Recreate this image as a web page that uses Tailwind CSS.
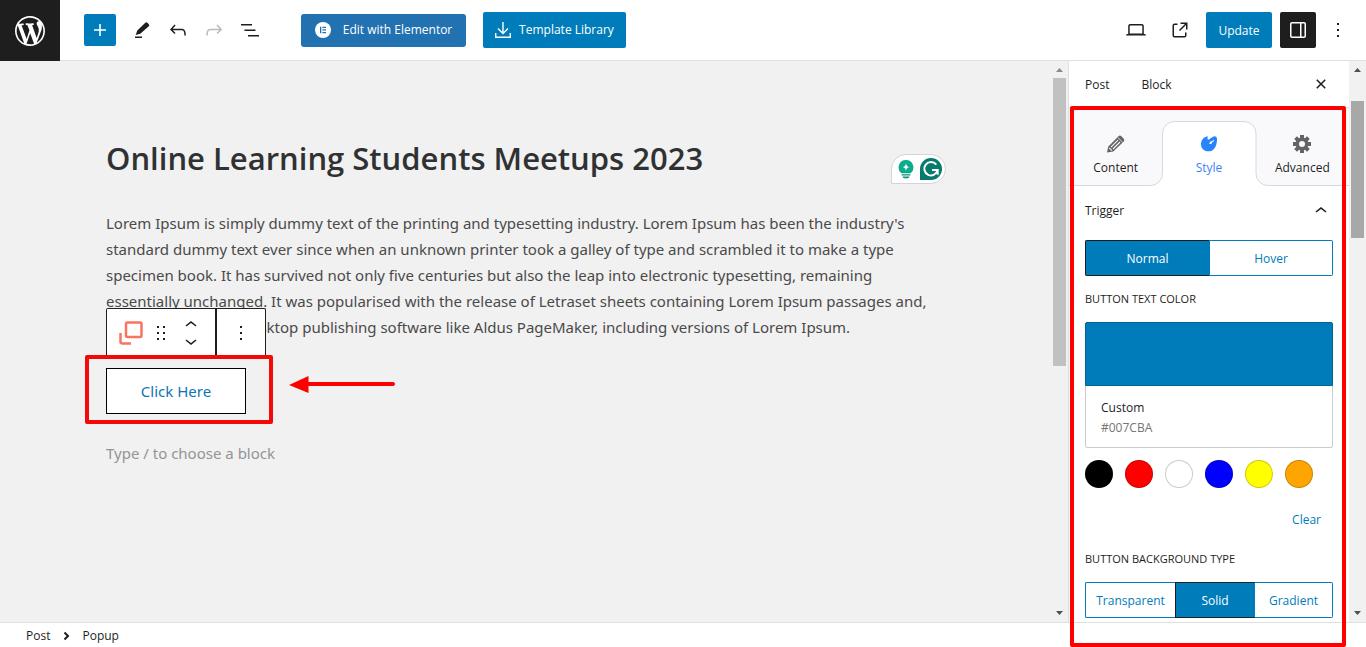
<!DOCTYPE html>
<html lang="en">

<head>
  <meta charset="UTF-8">
  <meta name="viewport" content="width=device-width, initial-scale=1.0">
  <title>Edit Post - Online Learning Students Meetups 2023</title>
  <script src="https://cdn.jsdelivr.net/npm/@tailwindcss/browser@4"></script>
</head>

<body class="relative flex h-screen flex-col overflow-hidden bg-white font-['Open_Sans',sans-serif] text-xs text-[#1e1e1e]">
  <!-- Top bar -->
  <header class="flex h-[61px] shrink-0 items-center border-b border-[#e0e0e0] pr-2.5">
    <a href="#" aria-label="View posts" class="-mb-px flex h-[61px] w-[60px] items-center justify-center bg-[#1e1e1e]">
      <svg class="size-9 fill-white" viewBox="-2 -2 24 24"><path d="M20 10c0-5.51-4.49-10-10-10C4.48 0 0 4.49 0 10c0 5.52 4.48 10 10 10 5.51 0 10-4.48 10-10zM7.78 15.37L4.37 6.22c.55-.02 1.17-.08 1.17-.08.5-.06.44-1.13-.06-1.11 0 0-1.45.11-2.37.11-.18 0-.37 0-.58-.01C4.12 2.69 6.87 1.11 10 1.11c2.33 0 4.45.87 6.05 2.34-.68-.11-1.65.39-1.65 1.58 0 .74.45 1.36.9 2.1.35.61.55 1.36.55 2.46 0 1.49-1.4 5-1.4 5l-3.03-8.37c.54-.02.82-.17.82-.17.5-.05.44-1.25-.06-1.22 0 0-1.44.12-2.38.12-.87 0-2.33-.12-2.33-.12-.5-.03-.56 1.2-.06 1.22l.92.08 1.26 3.41zM17.41 10c.24-.64.74-1.87.43-4.25.7 1.29 1.05 2.71 1.05 4.25 0 3.29-1.73 6.24-4.4 7.78.97-2.59 1.94-5.2 2.92-7.78zM6.1 18.09C3.12 16.65 1.11 13.53 1.11 10c0-1.3.23-2.48.72-3.59C3.25 10.3 4.67 14.2 6.1 18.09zm4.03-6.63l2.58 6.98c-.86.29-1.76.45-2.71.45-.79 0-1.57-.11-2.29-.33.81-2.38 1.62-4.74 2.42-7.1z"/></svg>
    </a>

    <div class="ml-6 flex items-center">
      <button aria-label="Toggle block inserter" class="mr-2 flex size-8 items-center justify-center rounded-xs bg-[#007cba]">
        <svg class="size-6 fill-white" viewBox="0 0 24 24"><path d="M18 11.2h-5.2V6h-1.6v5.2H6v1.6h5.2V18h1.6v-5.2H18z"/></svg>
      </button>
      <button aria-label="Tools" class="flex size-9 items-center justify-center">
        <svg class="size-6 fill-current" viewBox="0 0 24 24"><path d="M18.800 6.200 17.400 4.800a1.500 1.500 0 0 0-2.100 0L7.300 12.600 5.700 17l4.600-1.300 8.500-7.400a1.500 1.500 0 0 0 0-2.100ZM12 18.500H5V20h7v-1.500Z"/></svg>
      </button>
      <button aria-label="Undo" class="flex size-9 items-center justify-center">
        <svg class="size-6 fill-current" viewBox="0 0 24 24"><path d="M18.3 11.7c-.6-.6-1.4-.9-2.3-.9H6.7l2.9-3.3-1.1-1-4.5 5L8.5 16l1-1-2.7-2.7H16c.5 0 .9.2 1.3.5 1 1 1 3.4 1 4.5v.3h1.5v-.2c0-1.5 0-4.3-1.5-5.7z"/></svg>
      </button>
      <button aria-label="Redo" class="flex size-9 items-center justify-center text-[#bbb]">
        <svg class="size-6 fill-current" viewBox="0 0 24 24"><path d="M15.6 6.5l-1.1 1 2.9 3.3H8c-.9 0-1.7.3-2.3.9-1.4 1.5-1.4 4.2-1.4 5.6v.2h1.5v-.3c0-1.1 0-3.5 1-4.5.3-.3.7-.5 1.3-.5h9.2L14.5 15l1.1 1.1 4.6-4.6-4.6-5z"/></svg>
      </button>
      <button aria-label="Document overview" class="flex size-9 items-center justify-center">
        <svg class="size-6 fill-current" viewBox="0 0 24 24"><path d="M3 6h11v1.5H3V6Zm3.5 5.5h11V13h-11v-1.5ZM21 17H10v1.5h11V17Z"/></svg>
      </button>
    </div>

    <div class="ml-[33px] flex items-center gap-[17px] text-white">
      <button class="flex h-[33px] w-[165px] items-center justify-center gap-3 rounded-[3px] bg-[#2271b1]">
        <svg class="size-4" viewBox="0 0 16 16"><circle cx="8" cy="8" r="8" fill="#fff"/><path fill="#2271b1" d="M5 4.7h1.3v6.6H5zM7.4 4.7H11V6H7.4zM7.4 7.3H11v1.3H7.4zM7.4 10H11v1.3H7.4z"/></svg>
        Edit with Elementor
      </button>
      <button class="flex h-9 w-[143px] items-center justify-center gap-2 rounded-xs bg-[#007cba]">
        <svg class="size-4 fill-none stroke-white stroke-[1.4]" viewBox="0 0 16 16"><path d="M8 0v11M3 6.5l5 5 5-5M.7 11v4.3h14.6V11"/></svg>
        Template Library
      </button>
    </div>

    <div class="ml-auto flex items-center">
      <button aria-label="View" class="flex size-9 items-center justify-center">
        <svg class="size-6 fill-current" viewBox="0 0 24 24"><path d="M20.5 16h-.7V8c0-1.1-.9-2-2-2H6.2c-1.1 0-2 .9-2 2v8h-.7c-.8 0-1.5.7-1.5 1.5h20c0-.8-.7-1.5-1.5-1.5zM5.7 8c0-.3.2-.5.5-.5h11.6c.3 0 .5.2.5.5v7.6H5.7V8z"/></svg>
      </button>
      <a href="#" aria-label="View post" class="ml-2 flex size-9 items-center justify-center">
        <svg class="size-6 fill-current" viewBox="0 0 24 24"><path d="M19.5 4.5h-7V6h4.44l-5.97 5.97 1.06 1.06L18 7.06v4.44h1.5v-7Zm-13 1a2 2 0 0 0-2 2v10a2 2 0 0 0 2 2h10a2 2 0 0 0 2-2v-3H17v3a.5.5 0 0 1-.5.5h-10a.5.5 0 0 1-.5-.5v-10a.5.5 0 0 1 .5-.5h3V5.5h-3Z"/></svg>
      </a>
      <button class="ml-2 h-9 w-[66px] rounded-xs bg-[#007cba] pt-0.5 text-white">Update</button>
      <button aria-label="Settings" class="ml-2 flex size-9 items-center justify-center rounded-xs bg-[#1e1e1e]">
        <svg class="size-6 fill-white" viewBox="0 0 24 24"><path d="M18 4H6c-1.1 0-2 .9-2 2v12c0 1.1.9 2 2 2h12c1.1 0 2-.9 2-2V6c0-1.1-.9-2-2-2zm-4 14.5H6c-.3 0-.5-.2-.5-.5V6c0-.3.2-.5.5-.5h8v13zm4.5-.5c0 .3-.2.5-.5.5h-2.5v-13H18c.3 0 .5.2.5.5v12z"/></svg>
      </button>
      <button aria-label="Options" class="ml-1 flex size-9 items-center justify-center">
        <svg class="size-6 fill-current" viewBox="0 0 24 24"><path d="M13 19h-2v-2h2v2zm0-6h-2v-2h2v2zm0-6h-2V5h2v2z"/></svg>
      </button>
    </div>
  </header>

  <div class="flex min-h-0 flex-1">
    <!-- Canvas -->
    <main class="flex min-w-0 flex-1 bg-[#f1f1f1]">
      <div class="min-w-0 flex-1 pt-[76px] pl-[106px] font-['Noto_Sans',sans-serif] text-[15px] leading-[26px]">
        <div class="relative w-[840px]">
          <h1 class="font-['Open_Sans',sans-serif] text-[31px] leading-[42px] font-semibold whitespace-nowrap text-[#303133]">Online Learning Students Meetups 2023</h1>

          <!-- Grammarly -->
          <div class="absolute top-[17px] right-0 flex h-[30px] w-[55px] items-center gap-1.5 rounded-full rounded-bl-none border border-[#d2d4de] bg-white pl-1.5">
            <svg class="h-5 w-4" viewBox="0 0 16 20"><path fill="#0bab8b" d="M8 1a7.4 7.4 0 0 0-4.6 13.2h9.2A7.4 7.4 0 0 0 8 1Z"/><path fill="#fff" d="M8 4.2c.6 2.8 1.1 3.3 3.8 3.9-2.7.6-3.2 1.1-3.8 3.9-.6-2.8-1.1-3.3-3.8-3.9C6.9 7.5 7.4 7 8 4.200Z"/><path fill="#0a8f78" d="M3.6 15.300h8.800v1.300H3.600zM4.500 17.400h7a2 2 0 0 1-2 1.800h-3a2 2 0 0 1-2-1.800Z"/></svg>
            <svg class="size-[22px]" viewBox="0 0 22 22"><path fill="#067a6b" d="M11 0a11 11 0 1 1 0 22H0V11A11 11 0 0 1 11 0Z"/><path fill="none" stroke="#fff" stroke-width="2" d="M16.300 6.600a6.700 6.700 0 1 0 1.300 5.400H12M17.700 12v4.700"/></svg>
          </div>

          <p class="mt-[31px] whitespace-nowrap text-[#4a4a4a]">
            Lorem Ipsum is simply dummy text of the printing and typesetting industry. Lorem Ipsum has been the industry's<br>
            standard dummy text ever since when an unknown printer took a galley of type and scrambled it to make a type<br>
            specimen book. It has survived not only five centuries but also the leap into electronic typesetting, remaining<br>
            essentially unchanged. It was popularised with the release of Letraset sheets containing Lorem Ipsum passages and,<br>
            more recently with desktop publishing software like Aldus PageMaker, including versions of Lorem Ipsum.
          </p>

          <div class="relative mt-7 w-[140px]">
            <!-- Block toolbar -->
            <div class="absolute bottom-[58px] left-0 flex h-12 w-40 rounded-t-xs border border-b-0 border-[#1e1e1e] bg-white">
              <div class="flex w-[110px] items-center border-r-2 border-[#1e1e1e] pl-3">
                <button aria-label="Popup">
                  <svg class="size-6 fill-none stroke-[#f9745f] stroke-[2.5]" viewBox="0 0 24 24"><rect x="7" y="1.500" width="15.500" height="14.500" rx="1.500"/><path d="M1.500 12v8.500a2 2 0 0 0 2 2H12"/></svg>
                </button>
                <button aria-label="Drag" class="ml-1.5">
                  <svg class="size-6 fill-current" viewBox="0 0 24 24"><path d="M8 7h2V5H8v2zm0 6h2v-2H8v2zm0 6h2v-2H8v2zm6-14v2h2V5h-2zm0 8h2v-2h-2v2zm0 6h2v-2h-2v2z"/></svg>
                </button>
                <div class="ml-1.5 flex flex-col">
                  <button aria-label="Move up" class="h-4">
                    <svg class="h-4 w-6 fill-current" viewBox="0 4 24 16"><path d="M6.500 12.400L12 8l5.500 4.400-.9 1.200L12 10l-4.500 3.600-1-1.200z"/></svg>
                  </button>
                  <button aria-label="Move down" class="h-4">
                    <svg class="h-4 w-6 fill-current" viewBox="0 4 24 16"><path d="M17.500 11.600L12 16l-5.500-4.400.9-1.200L12 14l4.500-3.600 1 1.200z"/></svg>
                  </button>
                </div>
              </div>
              <button aria-label="Block options" class="flex flex-1 items-center justify-center">
                <svg class="size-6 fill-current" viewBox="0 0 24 24"><path d="M13 19h-2v-2h2v2zm0-6h-2v-2h2v2zm0-6h-2V5h2v2z"/></svg>
              </button>
            </div>

            <button class="block h-[46px] w-full border border-black bg-white text-[#0c76b3]">Click Here</button>

            <!-- Callout frame and arrow -->
            <div class="absolute -top-[13px] -right-[27px] -left-[21px] h-[69px] rounded-xs border-4 border-[#f50808]"></div>
            <svg class="absolute top-2 left-[183px] h-[18px] w-[107px]" viewBox="0 0 107 18"><path fill="#f00" d="M0 9 19.500 0v17z"/><path stroke="#f00" stroke-width="4" stroke-linecap="round" d="M18 8h86"/></svg>
          </div>

          <p class="mt-[26px] text-[#949494]">Type / to choose a block</p>
        </div>
      </div>

      <div class="flex w-[18px] flex-col items-center justify-between bg-[#f1f1f1] py-[7px]">
        <svg class="h-1 w-[7px] fill-[#8a8a8a]" viewBox="0 0 7 4"><path d="M0 4 3.500 0 7 4z"/></svg>
        <div class="mt-1.5 mb-auto h-[288px] w-[13px] bg-[#c1c1c1]"></div>
        <svg class="h-1 w-[7px] fill-[#505050]" viewBox="0 0 7 4"><path d="M0 0 3.500 4 7 0z"/></svg>
      </div>
    </main>

    <!-- Settings sidebar -->
    <aside class="flex w-[298px] shrink-0 overflow-hidden border-l border-[#e0e0e0] bg-white">
      <div class="min-w-0 flex-1">
        <div class="flex h-[47px] items-center border-b border-[#e0e0e0] px-4">
          <button class="pt-0.5">Post</button>
          <button class="ml-8 pt-0.5">Block</button>
          <button aria-label="Close settings" class="ml-auto">
            <svg class="size-6 fill-current" viewBox="0 0 24 24"><path d="M12 13.060l3.712 3.713 1.061-1.060L13.061 12l3.712-3.712-1.060-1.060L12 10.938 8.288 7.227l-1.061 1.060L10.939 12l-3.712 3.712 1.060 1.061L12 13.061z"/></svg>
          </button>
        </div>

        <div class="relative h-[78px]">
          <svg class="absolute inset-0 size-full" viewBox="0 0 280 78" preserveAspectRatio="none"><path fill="#f9f9fc" d="M0 0h280v77.500h-81a12 12 0 0 1-12-12V25.500a12 12 0 0 0-12-12H105.500a12 12 0 0 0-12 12v40a12 12 0 0 1-12 12H0z"/><path fill="none" stroke="#d5d8de" d="M280 77.500h-81a12 12 0 0 1-12-12V25.500a12 12 0 0 0-12-12H105.500a12 12 0 0 0-12 12v40a12 12 0 0 1-12 12H0"/></svg>
          <div class="relative grid h-full grid-cols-3 pt-[26px]">
            <button class="flex flex-col items-center gap-1.5">
              <svg class="size-5" viewBox="0 0 20 20"><path fill="#646464" d="m1 18.500 1.300-6L12.500 2.300a2 2 0 0 1 2.800 0L17.700 4.700a2 2 0 0 1 0 2.800L7.300 17.500z"/><path stroke="#f9f9fc" d="m11.800 3.500 4.800 4.700" stroke-width=".8"/><path stroke="#f9f9fc" stroke-width="1.100" d="m5 13.200 7-7M7 15l7-7M3.200 13.800l2.800 2.800"/></svg>
              Content
            </button>
            <button class="flex flex-col items-center gap-1.5 text-[#3b82f6]">
              <svg class="size-5" viewBox="0 0 20 20"><path fill="#2684fc" d="M7.600 2.400c.9-.2 1.300.4 1 1.500-.3 1.500.5 2.200 1.600 1.400L14 2.700c1.900-1.200 4-.3 4 2.200 0 7-2.700 12.400-8.600 12.400C5 17.300 2 14.400 2 10.200 2 6.200 4.500 3.200 7.600 2.400Z"/><path fill="#fff" d="M14.800 5.700c.6.500.4 1.200-.1 1.600l-1.500 1c.1 1.500-1.800 2.400-3.300 1.300 1-.3.700-1.600 1.700-2.100.4-.2.900-.2 1.300 0Z"/></svg>
              Style
            </button>
            <button class="flex flex-col items-center gap-1.5">
              <svg class="size-5" viewBox="0 0 20 20"><g stroke="#646464" stroke-width="4"><path d="M10 1v18M1 10h18M3.600 3.600l12.800 12.800M16.400 3.600 3.600 16.400"/></g><circle cx="10" cy="10" r="6.500" fill="#646464"/><circle cx="10" cy="10" r="3" fill="#f9f9fc"/></svg>
              Advanced
            </button>
          </div>
        </div>

        <div class="px-4">
          <button class="flex h-[54px] w-full items-center justify-between pb-1">
            Trigger
            <svg class="size-6 fill-current" viewBox="0 0 24 24"><path d="M6.500 12.400L12 8l5.500 4.400-.9 1.200L12 10l-4.500 3.600-1-1.200z"/></svg>
          </button>

          <div class="flex h-9 text-[#007cba]">
            <button class="w-[125px] rounded-l-xs border border-[#1e1e1e] border-r-[#007cba] bg-[#007cba] pt-0.5 text-white">Normal</button>
            <button class="flex-1 rounded-r-xs border border-l-0 border-[#007cba] pt-0.5">Hover</button>
          </div>

          <h2 class="mt-[15px] text-[11px] leading-4 uppercase">Button text color</h2>
          <button class="mt-[15px] block w-full rounded-xs border border-[#ccc] text-left">
            <span class="-mx-px -mt-px block h-16 rounded-t-xs border border-[#00639a] bg-[#007cba]"></span>
            <span class="block h-[61px] px-[15px] pt-3 leading-5">
              <span class="block">Custom</span>
              <span class="block text-[#757575]">#007CBA</span>
            </span>
          </button>

          <div class="mt-3 flex gap-3">
            <button aria-label="Black" class="size-7 rounded-full border border-black/20 bg-black"></button>
            <button aria-label="Red" class="size-7 rounded-full border border-black/20 bg-[#f00]"></button>
            <button aria-label="White" class="size-7 rounded-full border border-black/20 bg-white"></button>
            <button aria-label="Blue" class="size-7 rounded-full border border-black/20 bg-[#00f]"></button>
            <button aria-label="Yellow" class="size-7 rounded-full border border-black/20 bg-[#ff0]"></button>
            <button aria-label="Orange" class="size-7 rounded-full border border-black/20 bg-[#ffa500]"></button>
          </div>
          <div class="mt-[13px] flex justify-end pr-3">
            <button class="h-9 pt-0.5 text-[#007cba]">Clear</button>
          </div>

          <h2 class="mt-3.5 text-[11px] leading-4 uppercase">Button background type</h2>
          <div class="mt-[15px] flex h-9 text-[#007cba]">
            <button class="w-[90px] rounded-l-xs border border-r-0 border-[#007cba] pt-0.5">Transparent</button>
            <button class="w-20 border border-[#1e1e1e] border-r-[#007cba] bg-[#007cba] pt-0.5 text-white">Solid</button>
            <button class="flex-1 rounded-r-xs border border-l-0 border-[#007cba] pt-0.5">Gradient</button>
          </div>
        </div>
      </div>

      <div class="flex w-[17px] flex-col items-center justify-between bg-[#f1f1f1] py-[7px]">
        <svg class="h-1 w-[7px] fill-[#505050]" viewBox="0 0 7 4"><path d="M0 4 3.500 0 7 4z"/></svg>
        <div class="mt-[29px] mb-auto h-[137px] w-[13px] bg-[#a8a8a8]"></div>
        <svg class="h-1 w-[7px] fill-[#505050]" viewBox="0 0 7 4"><path d="M0 0 3.500 4 7 0z"/></svg>
      </div>
    </aside>
  </div>

  <!-- Breadcrumb -->
  <footer class="flex h-[25px] shrink-0 items-center gap-2 border-t border-[#e0e0e0] pt-px pl-[26px]">
    <button>Post</button>
    <svg class="size-4 fill-none stroke-current stroke-2" viewBox="0 0 16 16"><path d="m6.500 4.500 3.500 3.500-3.500 3.500"/></svg>
    <span>Popup</span>
  </footer>

  <!-- Callout frame around the settings -->
  <div class="absolute top-[106px] right-5 bottom-0 w-[276px] rounded-xs border-4 border-[#f00]"></div>
</body>

</html>
